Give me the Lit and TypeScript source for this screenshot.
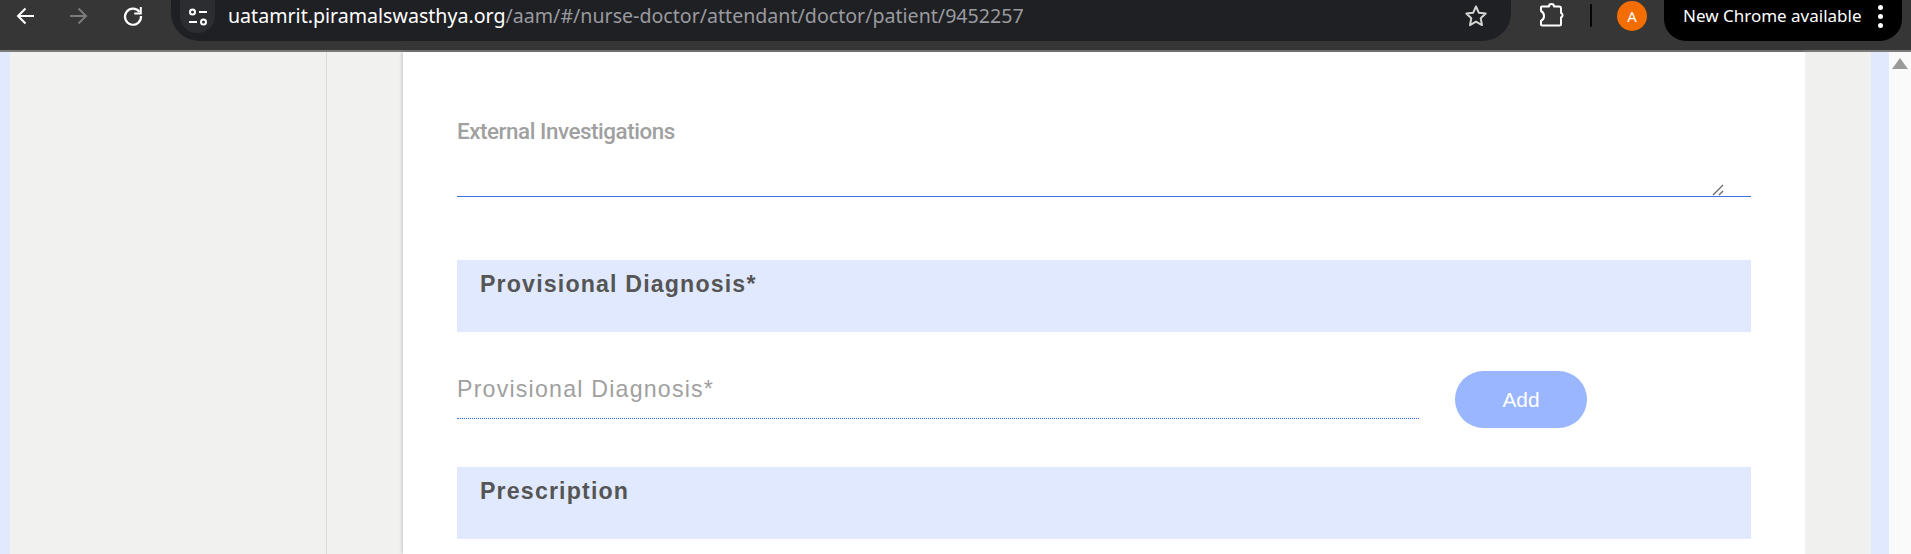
import { LitElement, html, css } from "lit";
import { customElement } from "lit/decorators.js";

@customElement("app-root")
export class AppRoot extends LitElement {
  static styles = css`
    :host { display: flex; flex-direction: column; width: 1911px; height: 554px; overflow: hidden; background: #fff; font-family: "Liberation Sans", Arial, sans-serif; }
    .chrome { flex: none; height: 50px; background: #363636; border-bottom: 2px solid #7b7b7b; display: flex; align-items: flex-start; }
    .navs { display: flex; padding-left: 5px; gap: 14px; width: 171px; box-sizing: border-box; flex: none; }
    .nav { width: 40px; height: 32px; display: flex; align-items: center; justify-content: center; flex: none; }
    .omni { width: 1340px; height: 41px; background: #1f2024; border-radius: 0 0 28px 28px; display: flex; align-items: flex-start; flex: none; box-sizing: border-box; padding-left: 9px; }
    .tune { width: 35px; height: 33px; background: #2c2d31; border-radius: 0 0 17px 17px; display: flex; align-items: center; justify-content: center; flex: none; }
    .url { font-family: "Noto Sans", "Open Sans", sans-serif; font-size: 19.6px; line-height: 32px; color: #fff; margin-left: 13px; white-space: nowrap; flex: 1; }
    .url span { color: #9a9a9f; }
    .star { margin-right: 22px; margin-top: 3px; flex: none; height: 26px; }
    .ext { margin-left: 29px; margin-top: 3px; flex: none; }
    .sep { width: 2px; height: 23px; background: #050505; margin: 4px 0 0 26px; border-radius: 1px; flex: none; }
    .avatar { width: 30px; height: 30px; border-radius: 50%; background: #f36d00; color: #fff; font: 15px/30px "Noto Sans", sans-serif; text-align: center; margin: 1px 0 0 25px; flex: none; }
    .update { margin-left: 17px; width: 238px; height: 41px; background: #000; border-radius: 0 0 22px 22px; color: #fff; font: 17px/32px "Noto Sans", sans-serif; display: flex; padding-left: 19px; box-sizing: border-box; flex: none; white-space: nowrap; }
    .dots { margin-left: 16px; display: flex; flex-direction: column; gap: 4px; padding-top: 5px; }
    .dots i { width: 5px; height: 5px; background: #fff; border-radius: 50%; display: block; }

    .page { flex: 1; display: flex; min-height: 0; background: #f1f1ef; }
    .edge { width: 10px; background: #e1e9fe; flex: none; }
    .side { width: 316px; border-right: 1px solid #dcdcda; flex: none; }
    .gutter { width: 76px; flex: none; }
    .card { width: 1402px; flex: none; background: #fff; box-shadow: 0 0 4px rgba(0,0,0,.3); box-sizing: border-box; padding: 0 54px; }
    .gutter2 { width: 66px; flex: none; background: #f0f0ef; }
    .edge2 { width: 18px; background: #e1e9fe; flex: none; }
    .scroll { width: 22px; background: #fafafa; flex: none; display: flex; justify-content: center; padding-top: 6px; box-sizing: border-box; }
    .tri { width: 0; height: 0; border-left: 8px solid transparent; border-right: 8px solid transparent; border-bottom: 11px solid #9a9a9a; }

    .ext-field { height: 145px; box-sizing: border-box; padding-top: 67px; border-bottom: 1px solid #3f6fe0; position: relative; }
    .ext-label { font-family: Roboto, sans-serif; font-size: 22.4px; font-weight: 500; line-height: 24px; color: #a0a0a0; letter-spacing: -0.45px; }
    .grip { position: absolute; right: 27px; bottom: 0; display: block; }
    .banner { height: 72px; background: #e1e9fe; box-sizing: border-box; padding: 11px 23px 0; font-size: 23.2px; font-weight: 700; line-height: 26px; color: #555; letter-spacing: 1.15px; }
    .b1 { margin-top: 63px; }
    .row { display: flex; align-items: flex-start; height: 135px; box-sizing: border-box; padding-top: 39px; }
    .field { width: 962px; height: 48px; border-bottom: 1px dotted #2f6bff; box-sizing: border-box; font-size: 23.2px; line-height: 36px; color: #a0a0a0; letter-spacing: 1.2px; flex: none; }
    .add { margin-left: 36px; width: 132px; height: 57px; border: none; border-radius: 29px; background: #9ab6ff; color: #fff; font: 20.8px "Liberation Sans", Arial, sans-serif; padding: 0; flex: none; }
  `;

  render() {
    return html`
      <div class="chrome">
        <div class="navs">
          <div class="nav">
            <svg width="20" height="20" viewBox="0 0 20 20" fill="none" stroke="#fff" stroke-width="2"><path d="M19 10H3M10.500 2.500L3 10l7.500 7.500"/></svg>
          </div>
          <div class="nav">
            <svg width="20" height="20" viewBox="0 0 20 20" fill="none" stroke="#7b7b7b" stroke-width="2"><path d="M1 10h16M9.500 2.500L17 10l-7.500 7.500"/></svg>
          </div>
          <div class="nav">
            <svg width="22" height="22" viewBox="0 0 22 22" fill="none" stroke="#fff" stroke-width="2.200"><path d="M17.500 7A8 8 0 1 0 19 11"/><path d="M18.800 2v6.500h-6.500" stroke-width="2"/></svg>
          </div>
        </div>
        <div class="omni">
          <div class="tune">
            <svg width="20" height="18" viewBox="0 0 20 18" fill="none" stroke="#fff" stroke-width="2"><circle cx="4.500" cy="4" r="2.500"/><path d="M11 4h8M1 14h8"/><circle cx="15.500" cy="14" r="2.500"/></svg>
          </div>
          <div class="url">uatamrit.piramalswasthya.org<span>/aam/#/nurse-doctor/attendant/doctor/patient/9452257</span></div>
          <svg class="star" width="26" height="26" viewBox="0 0 26 26" fill="none" stroke="#d4d4d4" stroke-width="2"><path d="M13 3.500l2.900 6.300 6.800.8-5 4.700 1.300 6.800-6-3.400-6 3.400 1.300-6.800-5-4.700 6.800-.8z" stroke-linejoin="round"/></svg>
        </div>
        <svg class="ext" width="24" height="24" viewBox="0 0 24 24" fill="none" stroke="#fff" stroke-width="2" stroke-linejoin="round"><path d="M2 3.500h7a2.500 2.500 0 0 1 5 0h5a2 2 0 0 1 2 2v4.500a2.400 2.400 0 0 1 0 4.500V21a1.500 1.500 0 0 1-1.500 1.500H2.500A1.500 1.500 0 0 1 1 21v-3a5.500 5.500 0 0 0 3-5 5.500 5.500 0 0 0-3-5V4.500a1 1 0 0 1 1-1z"/></svg>
        <div class="sep"></div>
        <div class="avatar">A</div>
        <div class="update">New Chrome available<div class="dots"><i></i><i></i><i></i></div></div>
      </div>
      <div class="page">
        <div class="edge"></div>
        <div class="side"></div>
        <div class="gutter"></div>
        <div class="card">
          <div class="ext-field">
            <div class="ext-label">External Investigations</div>
            <svg class="grip" width="12" height="12" viewBox="0 0 12 12" fill="none" stroke="#666" stroke-width="1.200"><path d="M1 11L11 1M7 11l4-4"/></svg>
          </div>
          <div class="banner b1">Provisional Diagnosis*</div>
          <div class="row">
            <div class="field">Provisional Diagnosis*</div>
            <button class="add">Add</button>
          </div>
          <div class="banner">Prescription</div>
        </div>
        <div class="gutter2"></div>
        <div class="edge2"></div>
        <div class="scroll"><div class="tri"></div></div>
      </div>
    `;
  }
}
